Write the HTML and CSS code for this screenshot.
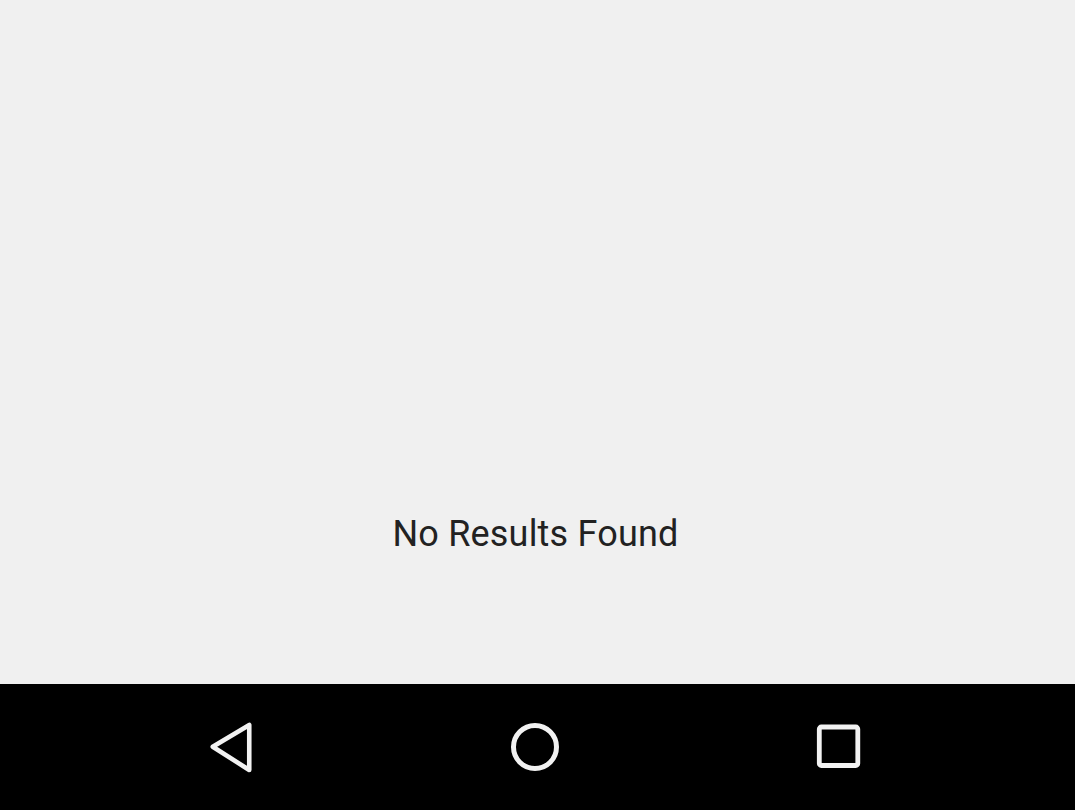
FILE: index.html
```html
<!DOCTYPE html>
<html>
<head>
<meta charset="utf-8">
<link rel="stylesheet" href="styles.css">
</head>
<body>
<div class="screen">
  <main class="content">
    <p class="empty">No Results Found</p>
  </main>
  <nav class="navbar">
    <div class="nav-btn">
      <svg width="60" height="60" viewBox="0 0 60 60"><path d="M11.75 29.7 L48.25 8 L48.25 53 Z" fill="none" stroke="#f2f2f2" stroke-width="4.6" stroke-linejoin="round"/></svg>
    </div>
    <div class="nav-btn">
      <svg width="60" height="60" viewBox="0 0 60 60"><circle cx="30" cy="30" r="21.5" fill="none" stroke="#f2f2f2" stroke-width="5"/></svg>
    </div>
    <div class="nav-btn">
      <svg width="60" height="60" viewBox="0 0 60 60"><rect x="10.3" y="10" width="38.5" height="38.5" rx="2" fill="none" stroke="#f2f2f2" stroke-width="4.8"/></svg>
    </div>
  </nav>
</div>
</body>
</html>
```
FILE: styles.css
```css
html, body {
  margin: 0;
  padding: 0;
}
body {
  width: 1075px;
  height: 810px;
  overflow: hidden;
  background: #f0f0f0;
  font-family: Roboto, "Noto Sans", sans-serif;
}
.screen {
  display: flex;
  flex-direction: column;
  height: 810px;
}
.content {
  height: 684px;
  display: flex;
  flex-direction: column;
  align-items: center;
  justify-content: flex-end;
  box-sizing: border-box;
  padding: 0 4px 128px 0;
  background: #f0f0f0;
}
.empty {
  margin: 0;
  font-size: 36px;
  line-height: 44px;
  color: #222222;
  letter-spacing: 0.2px;
}
.navbar {
  height: 126px;
  background: #000;
  display: grid;
  grid-template-columns: repeat(3, 304px);
  padding-left: 79px;
  align-items: center;
}
.nav-btn {
  display: flex;
  justify-content: center;
  align-items: center;
}
.nav-btn svg {
  display: block;
}
```
